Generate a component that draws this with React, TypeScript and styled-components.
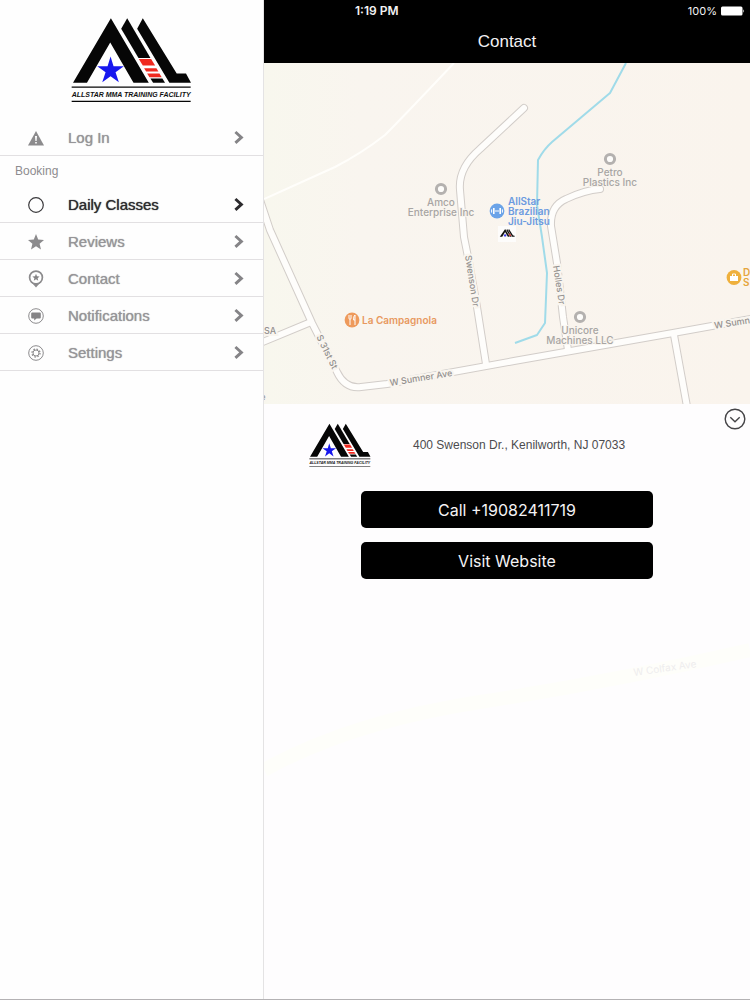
import React from "react";
import styled, { createGlobalStyle } from "styled-components";

const GlobalStyle = createGlobalStyle`
  *, *::before, *::after { box-sizing: border-box; }
  body {
    margin: 0;
    background: #fefdfe;
    font-family: "Liberation Sans", Arial, sans-serif;
  }
`;

const Screen = styled.div`
  display: flex;
  min-height: 100vh;
  border-bottom: 1px solid #b4b2b4;
`;

const Sidebar = styled.aside`
  flex: 0 0 264px;
  border-right: 1px solid #e4e3e4;
  background: #fefefe;
`;

const Brand = styled.div`
  display: flex;
  justify-content: center;
  align-items: flex-start;
  height: 119px;
  padding-top: 17px;
`;

const Menu = styled.nav`
  display: flex;
  flex-direction: column;
`;

const SectionTitle = styled.h2`
  margin: 0;
  height: 30px;
  padding-left: 15px;
  font-size: 12px;
  font-weight: 400;
  line-height: 30px;
  color: #8d8c8f;
`;

const MenuItem = styled.a<{ $active?: boolean }>`
  display: grid;
  grid-template-columns: 36px 1fr 16px;
  column-gap: 14px;
  align-items: center;
  height: 37px;
  padding: 2px 16px 0 18px;
  border-bottom: 1px solid #e2e0e2;
  font-size: 15px;
  line-height: 20px;
  text-decoration: none;
  text-shadow: 0 0 1px currentColor;
  color: ${(p) => (p.$active ? "#2c2b2e" : "#969598")};
`;

const IconSlot = styled.span`
  display: flex;
  justify-content: center;
`;

const Main = styled.main`
  flex: 1;
  min-width: 0;
  display: flex;
  flex-direction: column;
`;

const TopBar = styled.header`
  height: 63px;
  background: #000;
  color: #f2f1f3;
`;

const StatusBar = styled.div`
  display: grid;
  grid-template-columns: 1fr auto;
  align-items: center;
  height: 21px;
  padding: 0 5px 0 91px;
  font-family: Inter, sans-serif;
  font-size: 11px;
  line-height: 14px;
`;

const Clock = styled.span`
  font-size: 12px;
  font-weight: 600;
`;

const Battery = styled.span`
  display: flex;
  align-items: center;
  gap: 4px;
`;

const Title = styled.h1`
  margin: 0;
  text-align: center;
  font-size: 17px;
  font-weight: 400;
  line-height: 42px;
`;

const MapView = styled.svg`
  display: block;
  width: 100%;
  height: 341px;
  background: #f9f5ef;
  font-family: Inter, sans-serif;
`;

const SiteLabel = styled.text`
  font-size: 10px;
  font-weight: 500;
  text-anchor: middle;
  paint-order: stroke;
  stroke: #f9f5ef;
  stroke-width: 2px;
  fill: #a8a5a3;
`;

const StreetLabel = styled(SiteLabel)`
  font-size: 9px;
  stroke-width: 4px;
  fill: #93908e;
`;

const PlaceLabel = styled.text<{ $color: string }>`
  font-size: 10px;
  font-weight: 600;
  fill: ${(p) => p.$color};
`;

const Contact = styled.section`
  flex: 1;
  display: flex;
  flex-direction: column;
  align-items: center;
  background: #fefdfe;
`;

const ContactRow = styled.div`
  align-self: stretch;
  display: grid;
  grid-template-columns: 62px 1fr 22px;
  align-items: start;
  height: 87px;
  padding: 4px 4px 0 45px;
`;

const SmallBrand = styled.div`
  padding-top: 15px;
`;

const Address = styled.address`
  padding: 29px 0 0 42px;
  font-size: 12px;
  font-style: normal;
  line-height: 16px;
  color: #4c4b4e;
`;

const CollapseButton = styled.button`
  display: block;
  width: 22px;
  height: 22px;
  padding: 0;
  border: 0;
  background: none;
`;

const ActionButton = styled.button`
  width: 60%;
  height: 37px;
  margin-bottom: 14px;
  padding: 0;
  border: 0;
  border-radius: 5px;
  background: #000;
  color: #f4f3f5;
  font-family: Inter, sans-serif;
  font-size: 16px;
  line-height: 20px;
`;

const FadedMap = styled.svg`
  display: block;
  width: 100%;
  height: 400px;
  font-family: Inter, sans-serif;
`;

function Logo({ width }: { width: number }) {
  return (
    <svg width={width} viewBox="34 20 364 258" role="img" aria-label="Allstar MMA Training Facility">
      <g fill="#060606">
        <path d="M154 24 L268 218 H222 L152 97 L82 218 H40 Z" />
        <path d="M203 24 L273 143 H237 L185 55 Z" />
        <path d="M273 205 H309 L317 218 H281 Z" />
        <path d="M250 24 L352 190 H380 L395 218 H330 L233 55 Z" />
        <path d="M36 229 H394 V233 H36 Z M36 272 H394 V276 H36 Z" />
      </g>
      <g fill="#f02a20">
        <path d="M238 146 H275 L287 166 H250 Z" />
        <path d="M254 174 H291 L297 184 H260 Z" />
        <path d="M263 190 H300 L307 201 H270 Z" />
      </g>
      <path
        fill="#1717ee"
        d="M153 139 L162 168 L193 168 L168 186 L178 216 L153 198 L128 216 L138 186 L113 168 L144 168 Z"
      />
      <text
        x="215"
        y="260"
        textAnchor="middle"
        fontFamily="'Liberation Sans', sans-serif"
        fontSize="21"
        fontWeight="700"
        fontStyle="italic"
        fill="#111"
      >
        ALLSTAR MMA TRAINING FACILITY
      </text>
    </svg>
  );
}

const STAR = "M8 0 L10.2 5.4 L16 5.9 L11.6 9.7 L13 15.4 L8 12.3 L3 15.4 L4.4 9.7 L0 5.9 L5.8 5.4 Z";

const icons = {
  warning: (
    <svg width="16" height="15" viewBox="0 0 16 15">
      <path d="M8 0 L16 14.5 H0 Z" fill="#8c8b8d" />
      <path d="M7 5 H9 L8.6 10 H7.4 Z M7.2 11 H8.8 V12.6 H7.2 Z" fill="#fff" />
    </svg>
  ),
  circle: (
    <svg width="16" height="16" viewBox="0 0 16 16">
      <circle cx="8" cy="8" r="7.3" fill="none" stroke="#3a393c" strokeWidth="1.2" />
    </svg>
  ),
  star: (
    <svg width="16" height="16" viewBox="0 0 16 16">
      <path d={STAR} fill="#8c8b8d" />
    </svg>
  ),
  pin: (
    <svg width="16" height="18" viewBox="0 0 16 18">
      <path d="M8 17.5 L3.6 12.6 H12.4 Z" fill="#8c8b8d" />
      <circle cx="8" cy="7.5" r="6.4" fill="#fff" stroke="#8c8b8d" strokeWidth="1.7" />
      <path d={STAR} fill="#858486" transform="translate(4.4 3.8) scale(0.45)" />
    </svg>
  ),
  message: (
    <svg width="16" height="16" viewBox="0 0 16 16">
      <circle cx="8" cy="8" r="7.3" fill="none" stroke="#8c8b8d" />
      <path d="M4.2 4.4 H11.8 Q12.8 4.4 12.8 5.4 V9.4 Q12.8 10.4 11.8 10.4 H8.6 L6.2 12.6 V10.4 H4.2 Q3.2 10.4 3.2 9.4 V5.4 Q3.2 4.4 4.2 4.4 Z" fill="#858486" />
    </svg>
  ),
  gear: (
    <svg width="16" height="16" viewBox="0 0 16 16" fill="none" stroke="#8c8b8d">
      <circle cx="8" cy="8" r="7.3" />
      <circle cx="8" cy="8" r="3" />
      <circle cx="8" cy="8" r="4" strokeWidth="1.3" strokeDasharray="1.57 1.57" />
    </svg>
  ),
};

function Chevron({ active }: { active?: boolean }) {
  return (
    <svg width="16" height="16" viewBox="0 0 16 16" fill="none">
      <path d="M4.4 2 L10.4 7.4 L4.4 12.8" stroke={active ? "#2c2b2e" : "#858487"} strokeWidth="2.9" />
    </svg>
  );
}

type ItemProps = { icon: keyof typeof icons; label: string; active?: boolean };

function Item({ icon, label, active }: ItemProps) {
  return (
    <MenuItem href="#" $active={active}>
      <IconSlot>{icons[icon]}</IconSlot>
      <span>{label}</span>
      <Chevron active={active} />
    </MenuItem>
  );
}

const ROADS = [
  "M258 194 L270 230 L312 323 L337 372 Q345 389 361 387 L387 384 L514 361 L673 333 L756 318",
  "M258 344 L311 322",
  "M524 108 L480 149 Q458 168 460 190 L464 237 L469 262 L477 307 L486 364",
  "M600 189 Q585 190 566 199 Q550 206 551 226 L557 263 L563 317 L568 350",
  "M674 335 L688 412",
];

const SITES = [
  { x: 441, y: 189, lines: ["Amco", "Enterprise Inc"] },
  { x: 610, y: 159, lines: ["Petro", "Plastics Inc"] },
  { x: 580, y: 317, lines: ["Unicore", "Machines LLC"] },
];

const STREETS = [
  { x: 472, y: 281, angle: 81, name: "Swenson Dr" },
  { x: 559, y: 285, angle: 81, name: "Holles Dr" },
  { x: 327, y: 352, angle: 64, name: "S 31st St" },
  { x: 421, y: 378, angle: -9, name: "W Sumner Ave" },
  { x: 732, y: 323, angle: -9, name: "W Sumn" },
];

function AreaMap() {
  return (
    <MapView viewBox="264 63 486 341" preserveAspectRatio="xMidYMid slice" role="img" aria-label="Map of Kenilworth">
      <defs>
        <linearGradient id="land" x1="0" x2="1" y1="0" y2="0">
          <stop offset="0" stopColor="#f8f7ee" />
          <stop offset="0.2" stopColor="#f9f5ef" />
          <stop offset="1" stopColor="#faf4ed" />
        </linearGradient>
      </defs>
      <rect x="264" y="63" width="486" height="341" fill="url(#land)" />
      <g fill="none" strokeLinejoin="round">
        <path d="M264 199 L335 167 Q362 153 385 135 Q402 118 454 63" stroke="#fffefb" strokeWidth="2" />
        <path d="M626 63 L610 93 L552 142 Q544 149 538 160 L537 205 L542 237 L547 273 L545 323 L537 335 L515 343" stroke="#a0dbe9" strokeWidth="2" />
        <g stroke="#d2cdc9" strokeWidth="8" strokeLinecap="round">
          {ROADS.map((d) => <path key={d} d={d} />)}
        </g>
        <g stroke="#fefdfb" strokeWidth="6" strokeLinecap="round">
          {ROADS.map((d) => <path key={d} d={d} />)}
        </g>
      </g>
      {SITES.map((s) => (
        <g key={s.lines[0]}>
          <circle cx={s.x} cy={s.y} r="4.6" fill="#fdfcfa" stroke="#b4b1af" strokeWidth="3" />
          {s.lines.map((line, i) => (
            <SiteLabel key={line} x={s.x} y={s.y + 17 + i * 10}>{line}</SiteLabel>
          ))}
        </g>
      ))}
      {STREETS.map((s) => (
        <StreetLabel key={s.name} transform={`translate(${s.x} ${s.y}) rotate(${s.angle})`} dy="3">
          {s.name}
        </StreetLabel>
      ))}
      <StreetLabel x="270" y="334">SA</StreetLabel>
      <StreetLabel x="263" y="400">e</StreetLabel>

      <circle cx="497" cy="211" r="7.4" fill="#6ba3e8" />
      <g fill="none" stroke="#fff">
        <path d="M493.8 208 V214 M500.2 208 V214" strokeWidth="1.6" />
        <path d="M491.6 209.4 V212.6 M502.4 209.4 V212.6 M495 211 H499" />
      </g>
      <PlaceLabel $color="#6c9be0" x="508" y="205">AllStar</PlaceLabel>
      <PlaceLabel $color="#6c9be0" x="508" y="215">Brazilian</PlaceLabel>
      <PlaceLabel $color="#6c9be0" x="508" y="225">Jiu-Jitsu</PlaceLabel>

      <rect x="498" y="226" width="18" height="16" fill="#fdfcfb" />
      <g transform="translate(499 228) scale(0.04)">
        <path d="M154 24 L268 218 H222 L152 97 L82 218 H20 Z M203 24 L317 218 H281 L185 55 Z M250 24 L352 190 H380 L395 218 H330 L233 55 Z" fill="#111" />
        <circle cx="153" cy="185" r="30" fill="#3b3be8" />
        <path d="M238 146 H275 L307 201 H270 Z" fill="#e0322b" />
      </g>

      <circle cx="352" cy="320" r="7.4" fill="#ee9a5c" />
      <path d="M349 315 V318 Q349 319.5 350 319.5 V325 M351 315 V318 Q351 319.5 350 319.5 M355 325 V315 Q353.4 316 353.6 320 H355" fill="none" stroke="#fff" />
      <PlaceLabel $color="#e8995f" x="362" y="324">La Campagnola</PlaceLabel>

      <circle cx="734" cy="277.5" r="7.4" fill="#efb03c" />
      <path d="M730 276 H738 V281 H730 Z" fill="#fff" />
      <path d="M732.5 276 V274 H735.5 V276" fill="none" stroke="#fff" />
      <PlaceLabel $color="#e5a53c" x="743" y="276">D</PlaceLabel>
      <PlaceLabel $color="#e5a53c" x="743" y="286">S</PlaceLabel>
    </MapView>
  );
}

export default function App() {
  return (
    <>
      <GlobalStyle />
      <Screen>
        <Sidebar>
          <Brand><Logo width={121} /></Brand>
          <Menu>
            <Item icon="warning" label="Log In" />
            <SectionTitle>Booking</SectionTitle>
            <Item icon="circle" label="Daily Classes" active />
            <Item icon="star" label="Reviews" />
            <Item icon="pin" label="Contact" />
            <Item icon="message" label="Notifications" />
            <Item icon="gear" label="Settings" />
          </Menu>
        </Sidebar>
        <Main>
          <TopBar>
            <StatusBar>
              <Clock>1:19 PM</Clock>
              <Battery>
                100%
                <svg width="24" height="10" viewBox="0 0 24 10" fill="#fff">
                  <rect x="0" y="0.5" width="21.5" height="9" rx="1.5" />
                  <path d="M22.3 3.2 Q24 5 22.3 6.8 Z" />
                </svg>
              </Battery>
            </StatusBar>
            <Title>Contact</Title>
          </TopBar>
          <AreaMap />
          <Contact>
            <ContactRow>
              <SmallBrand><Logo width={62} /></SmallBrand>
              <Address>400 Swenson Dr., Kenilworth, NJ 07033</Address>
              <CollapseButton aria-label="Collapse">
                <svg width="22" height="22" viewBox="0 0 22 22" fill="none" stroke="#454447" strokeWidth="1.4">
                  <circle cx="11" cy="11" r="9.8" />
                  <path d="M6.3 9.3 L11 13.8 L15.7 9.3" />
                </svg>
              </CollapseButton>
            </ContactRow>
            <ActionButton>Call +19082411719</ActionButton>
            <ActionButton>Visit Website</ActionButton>
            <FadedMap viewBox="264 593 486 400" preserveAspectRatio="xMidYMid slice" aria-hidden="true">
              <path d="M264 770 Q350 722 480 702 T750 650" fill="none" stroke="#fefefa" strokeWidth="14" />
              <text x="634" y="676" transform="rotate(-8 634 676)" fontSize="10" fill="#eeedee">W Colfax Ave</text>
            </FadedMap>
          </Contact>
        </Main>
      </Screen>
    </>
  );
}
